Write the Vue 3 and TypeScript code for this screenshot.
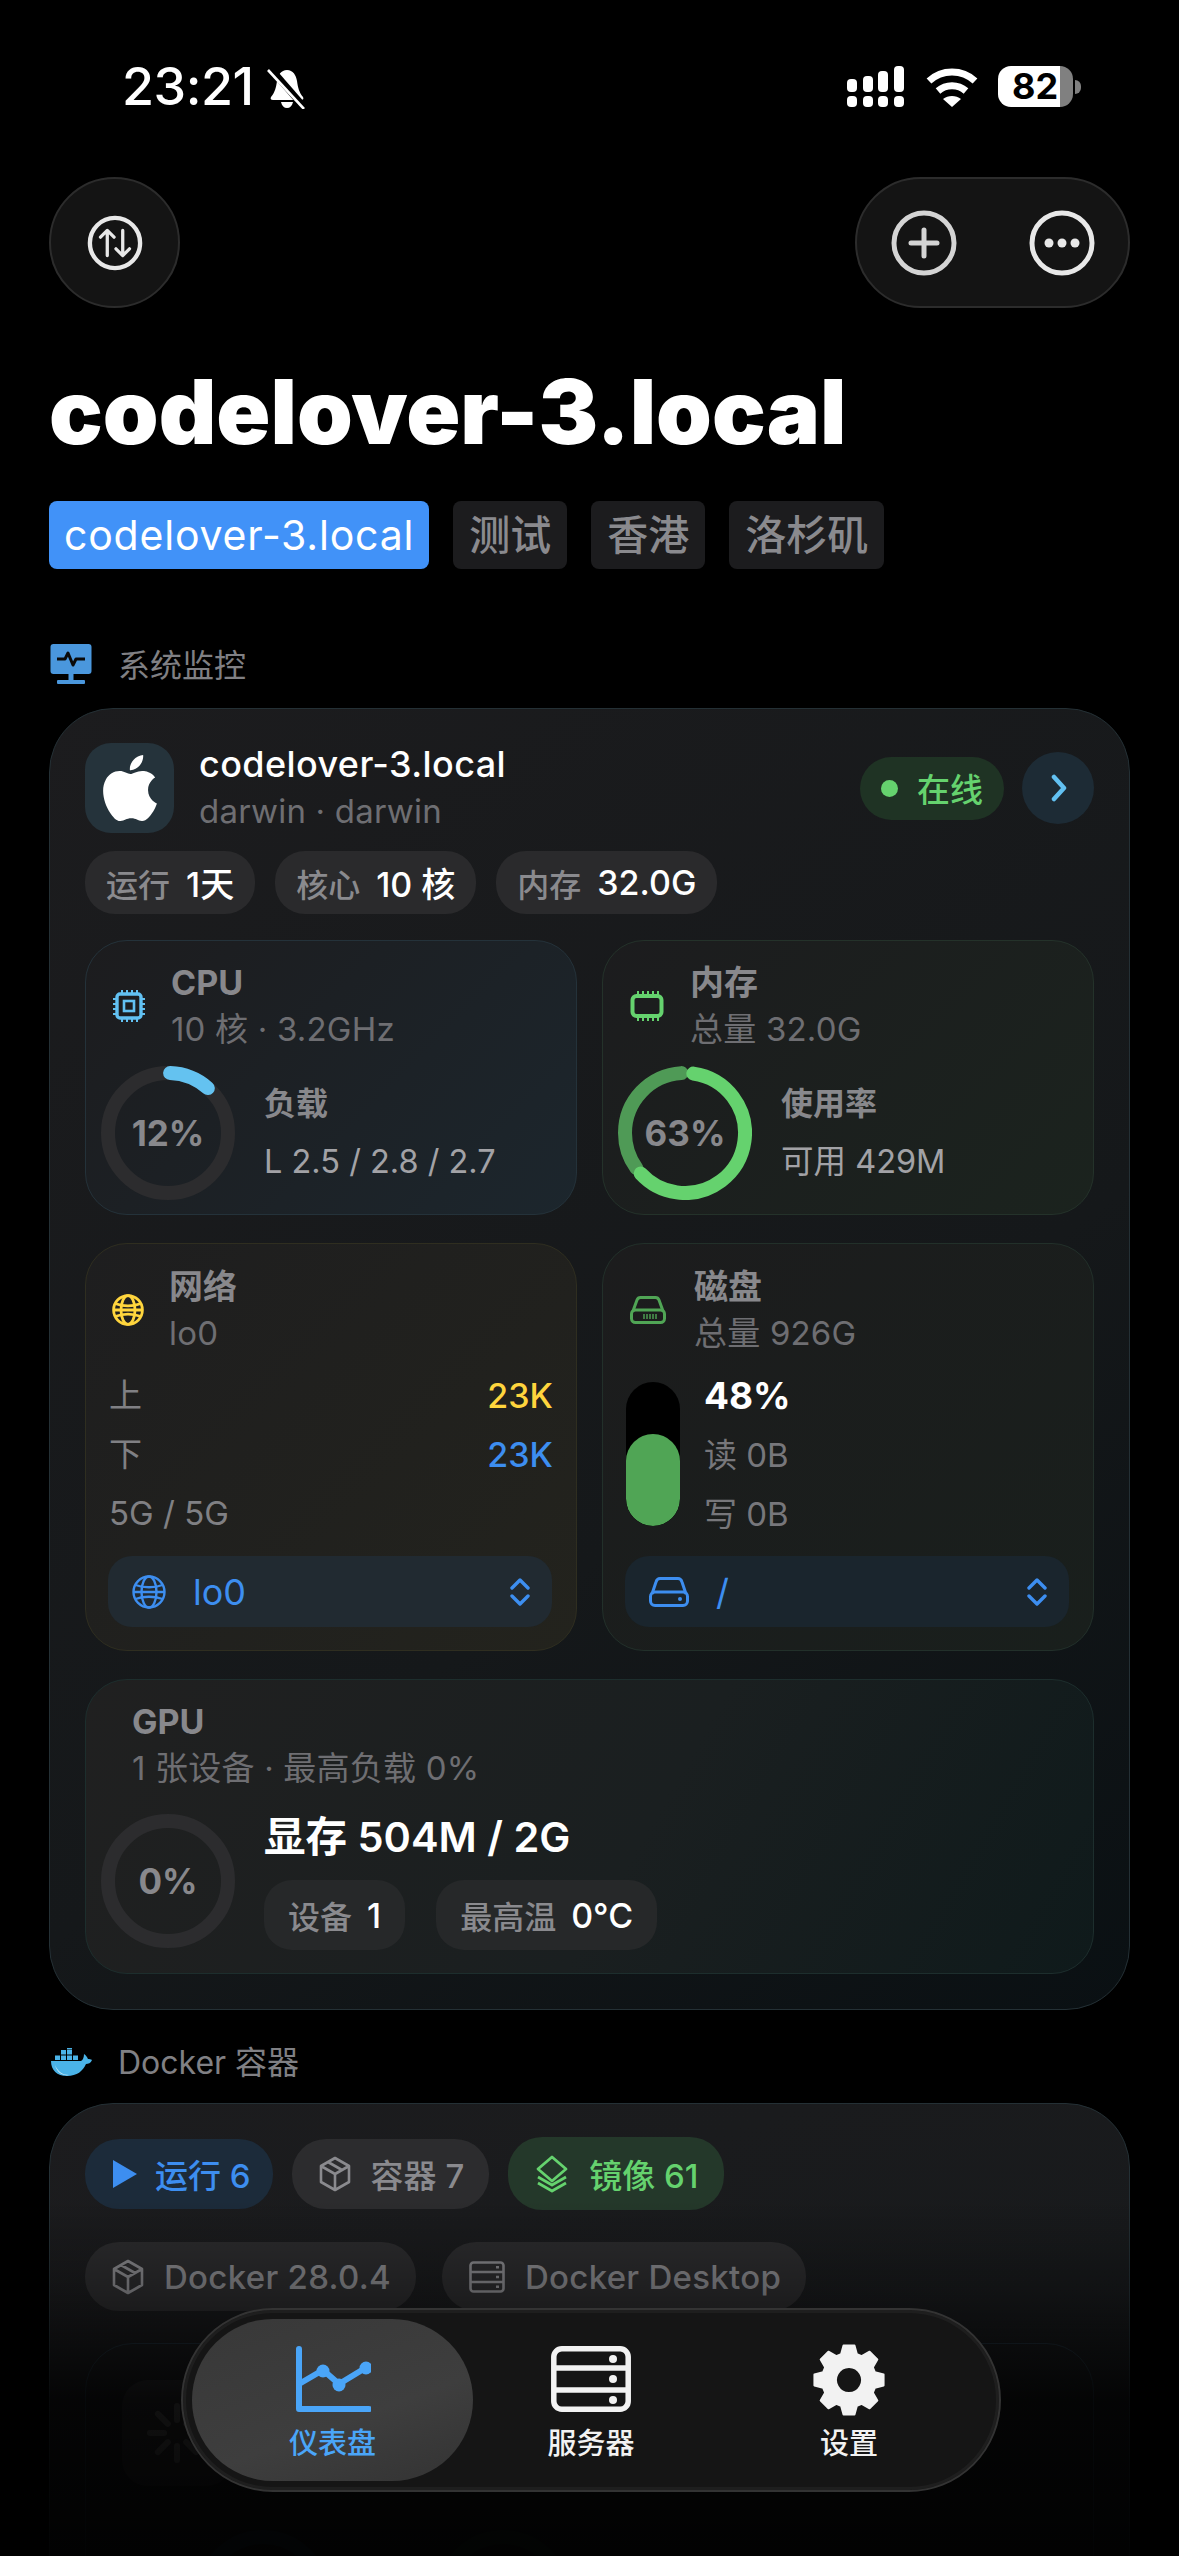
<script setup lang="ts">
// 顶部标签
const tabs = ['测试', '香港', '洛杉矶']

const hostChips = [
  { label: '运行', value: '1天' },
  { label: '核心', value: '10 核' },
  { label: '内存', value: '32.0G' },
]

function polar(r: number, deg: number): string {
  const a = (deg * Math.PI) / 180
  return `${(40 + r * Math.cos(a)).toFixed(2)} ${(40 + r * Math.sin(a)).toFixed(2)}`
}

// 八齿齿轮
function gearPath(): string {
  let d = ''
  for (let i = 0; i < 8; i++) {
    const c = i * 45 - 90
    d += `${i === 0 ? 'M' : 'L'}${polar(27, c - 17)} L${polar(35, c - 9)} L${polar(35, c + 9)} L${polar(27, c + 17)} `
  }
  return d + 'Z M40 27 a13 13 0 1 0 0.01 0 Z'
}
const gear = gearPath()

const spokes = [0, 45, 90, 135, 180, 225, 270, 315]
</script>

<template>
  <div class="page">
    <div class="status">
      <div class="status-left">
        <span class="time">23:21</span>
        <svg class="bell" width="40" height="42" viewBox="0 0 40 42">
          <path d="M20 3c6 0 9 5 10 11 1 7 2 11 6 16 1 2 0 3-2 3H6c-2 0-3-1-2-3 4-5 5-9 6-16 1-6 4-11 10-11z" fill="#fff" />
          <path d="M14 35h12c-1 4-3 6-6 6s-5-2-6-6z" fill="#fff" />
          <path d="M3 1l34 39" stroke="#000" stroke-width="7" />
          <path d="M1 3l36 39" stroke="#fff" stroke-width="2.6" />
        </svg>
      </div>
      <div class="status-right">
        <svg width="60" height="42" viewBox="0 0 60 42" fill="#fff">
          <rect x="1" y="13" width="10" height="13" rx="4" />
          <rect x="17" y="10" width="10" height="16" rx="4" />
          <rect x="32" y="5" width="10" height="21" rx="4" />
          <rect x="48" y="0" width="10" height="26" rx="4" />
          <rect x="1" y="30" width="10" height="11" rx="4" />
          <rect x="17" y="30" width="10" height="11" rx="4" />
          <rect x="32" y="30" width="10" height="11" rx="4" />
          <rect x="48" y="30" width="10" height="11" rx="4" />
        </svg>
        <svg class="wifi" width="52" height="40" viewBox="0 0 52 40" fill="none" stroke="#fff" stroke-width="7">
          <path d="M3 13C16 1 36 1 49 13" />
          <path d="M12 23c8-7 20-7 28 0" />
          <path d="M26 39l-9-8c5-4 13-4 18 0z" fill="#fff" stroke="none" />
        </svg>
        <div class="battery">
          <div class="battery-body"><span>82</span></div>
          <i class="battery-nub"></i>
        </div>
      </div>
    </div>

    <div class="toolbar">
      <button class="round-btn">
        <svg width="56" height="56" viewBox="0 0 58 58" fill="none" stroke="#e8e8e8" stroke-width="4.5" stroke-linecap="round" stroke-linejoin="round">
          <circle cx="29" cy="29" r="26" />
          <path d="M21 42V16M14 23l7-7 7 7" stroke-width="3.4" />
          <path d="M37 16v26M30 35l7 7 7-7" stroke-width="3.4" />
        </svg>
      </button>
      <div class="pill-btn">
        <svg width="66" height="66" viewBox="0 0 66 66" fill="none" stroke="#d4d4d4" stroke-width="5" stroke-linecap="round">
          <circle cx="33" cy="33" r="30" />
          <path d="M33 20v26M20 33h26" />
        </svg>
        <svg width="66" height="66" viewBox="0 0 66 66" fill="none" stroke="#e8e8e8" stroke-width="5">
          <circle cx="33" cy="33" r="30" />
          <g fill="#e8e8e8" stroke="none">
            <circle cx="20" cy="33" r="4.5" />
            <circle cx="33" cy="33" r="4.5" />
            <circle cx="46" cy="33" r="4.5" />
          </g>
        </svg>
      </div>
    </div>

    <h1 class="title">codelover-3.local</h1>

    <div class="tabs">
      <span class="tab active">codelover-3.local</span>
      <span v-for="t in tabs" :key="t" class="tab">{{ t }}</span>
    </div>

    <div class="section-head first">
      <svg width="42" height="42" viewBox="0 0 42 42">
        <rect x="0.5" y="0" width="41" height="30" rx="3" fill="#4a97dd" />
        <rect x="18.5" y="30" width="5" height="7" fill="#4a97dd" />
        <rect x="7" y="36" width="28" height="4" rx="1" fill="#4a97dd" />
        <path d="M7 15h8l3-6 5 12 3-6h9" fill="none" stroke="#0a0a0a" stroke-width="3" stroke-linejoin="round" />
      </svg>
      <span>系统监控</span>
    </div>

    <section class="card">
      <div class="host">
        <div class="host-logo">
          <svg width="66" height="66" viewBox="0 0 24 24" fill="#fff">
            <path d="M12.152 6.896c-.948 0-2.415-1.078-3.96-1.04-2.04.027-3.91 1.183-4.961 3.014-2.117 3.675-.546 9.103 1.519 12.09 1.013 1.454 2.208 3.09 3.792 3.039 1.52-.065 2.09-.987 3.935-.987 1.831 0 2.35.987 3.96.948 1.637-.026 2.676-1.48 3.676-2.948 1.156-1.688 1.636-3.325 1.662-3.415-.039-.013-3.182-1.221-3.22-4.857-.026-3.04 2.48-4.494 2.597-4.559-1.429-2.09-3.623-2.324-4.39-2.376-2-.156-3.675 1.09-4.61 1.09zM15.53 3.83c.843-1.012 1.4-2.427 1.245-3.83-1.207.052-2.662.805-3.532 1.818-.78.896-1.454 2.338-1.273 3.714 1.338.104 2.715-.688 3.559-1.701" />
          </svg>
        </div>
        <div class="host-text">
          <div class="host-name">codelover-3.local</div>
          <div class="host-sub">darwin · darwin</div>
        </div>
        <div class="online"><i></i>在线</div>
        <div class="go">
          <svg width="18" height="32" viewBox="0 0 18 32" fill="none" stroke="#62c1f2" stroke-width="4.5" stroke-linecap="round" stroke-linejoin="round">
            <path d="M5 5l10 11L5 27" />
          </svg>
        </div>
      </div>

      <div class="host-chips">
        <span v-for="c in hostChips" :key="c.label" class="chip">
          {{ c.label }}<b>{{ c.value }}</b>
        </span>
      </div>

      <div class="grid">
        <div class="panel cpu">
          <div class="panel-head">
            <svg class="head-icon" width="32" height="32" viewBox="0 0 32 32" fill="none" stroke="#62c1f2">
              <rect x="4" y="4" width="24" height="24" rx="3" stroke-width="3.4" />
              <rect x="11" y="11" width="10" height="10" stroke-width="2.6" />
              <path d="M9 0v3M14 0v3M19 0v3M24 0v3M9 29v3M14 29v3M19 29v3M24 29v3M0 9h3M0 14h3M0 19h3M0 24h3M29 9h3M29 14h3M29 19h3M29 24h3" stroke-width="2" />
            </svg>
            <div>
              <div class="panel-title">CPU</div>
              <div class="panel-sub">10 核 · 3.2GHz</div>
            </div>
          </div>
          <div class="gauge-row">
            <div class="ring">
              <svg width="134" height="134" viewBox="0 0 134 134" fill="none" stroke-width="14">
                <circle cx="67" cy="67" r="60" stroke="#2c2c2e" />
                <circle cx="67" cy="67" r="60" stroke="#64c2f0" pathLength="100" stroke-dasharray="11 100" stroke-linecap="round" transform="rotate(-88 67 67)" />
              </svg>
              <span>12%</span>
            </div>
            <div class="gauge-text">
              <div class="gauge-title">负载</div>
              <div class="gauge-value">L 2.5 / 2.8 / 2.7</div>
            </div>
          </div>
        </div>

        <div class="panel mem">
          <div class="panel-head">
            <svg class="head-icon" width="34" height="32" viewBox="0 0 34 32" fill="none" stroke="#65d26e">
              <rect x="2.5" y="6" width="29" height="20" rx="4" stroke-width="4" />
              <path d="M8 1v4M13 1v4M18 1v4M23 1v4M28 1v4M8 27v4M13 27v4M18 27v4M23 27v4M28 27v4" stroke-width="2" />
            </svg>
            <div>
              <div class="panel-title">内存</div>
              <div class="panel-sub">总量 32.0G</div>
            </div>
          </div>
          <div class="gauge-row">
            <div class="ring">
              <svg width="134" height="134" viewBox="0 0 134 134" fill="none" stroke-width="14">
                <circle cx="67" cy="67" r="60" stroke="#4f9a56" pathLength="100" stroke-dasharray="34 100" stroke-dashoffset="-65" stroke-linecap="round" transform="rotate(-90 67 67)" />
                <circle cx="67" cy="67" r="60" stroke="#65d26e" pathLength="100" stroke-dasharray="61 100" stroke-linecap="round" transform="rotate(-82 67 67)" />
              </svg>
              <span>63%</span>
            </div>
            <div class="gauge-text">
              <div class="gauge-title">使用率</div>
              <div class="gauge-value">可用 429M</div>
            </div>
          </div>
        </div>

        <div class="panel net">
          <div class="panel-head">
            <svg class="head-icon" width="32" height="32" viewBox="0 0 32 32" fill="none" stroke="#ffd53d" stroke-width="2.8">
              <circle cx="16" cy="16" r="14.4" />
              <ellipse cx="16" cy="16" rx="7" ry="14.4" />
              <path d="M3 9.5c8 3 18 3 26 0M1.6 16h28.8M3 22.5c8-3 18-3 26 0" />
            </svg>
            <div>
              <div class="panel-title">网络</div>
              <div class="panel-sub">lo0</div>
            </div>
          </div>
          <div class="net-rows">
            <div class="net-row"><span>上</span><b class="yellow">23K</b></div>
            <div class="net-row"><span>下</span><b class="blue">23K</b></div>
            <div class="net-row"><span>5G / 5G</span></div>
          </div>
          <div class="selector">
            <svg width="34" height="34" viewBox="0 0 34 34" fill="none" stroke="#3d8ef0" stroke-width="2.4">
              <circle cx="17" cy="17" r="15.5" />
              <ellipse cx="17" cy="17" rx="7.5" ry="15.5" />
              <path d="M3.5 10c8 3 19 3 27 0M1.5 17h31M3.5 24c8-3 19-3 27 0" />
            </svg>
            <span>lo0</span>
            <svg class="updown" width="20" height="28" viewBox="0 0 20 28" fill="none" stroke="#3d8ef0" stroke-width="3.4" stroke-linecap="round" stroke-linejoin="round">
              <path d="M2 10l8-8 8 8M2 18l8 8 8-8" />
            </svg>
          </div>
        </div>

        <div class="panel disk">
          <div class="panel-head">
            <svg class="head-icon" width="36" height="28" viewBox="0 0 36 28" fill="none" stroke="#50a555" stroke-width="3">
              <path d="M3 15l4-11c.6-1.600 2-2.500 3.500-2.500h15c1.500 0 2.900.9 3.500 2.500l4 11" />
              <rect x="1.500" y="14" width="33" height="12.500" rx="4" />
              <path d="M14 18v5M17 18v5M20 18v5M23 18v5M26 18v5" stroke-width="1.4" />
            </svg>
            <div>
              <div class="panel-title">磁盘</div>
              <div class="panel-sub">总量 926G</div>
            </div>
          </div>
          <div class="disk-body">
            <div class="bar"><div class="bar-fill" :style="{ height: '64%' }"></div></div>
            <div class="disk-stats">
              <b>48%</b>
              <span>读 0B</span>
              <span>写 0B</span>
            </div>
          </div>
          <div class="selector">
            <svg width="40" height="30" viewBox="0 0 40 30" fill="none" stroke="#3d8ef0" stroke-width="3">
              <path d="M3 17L7 5c.6-2 2-3.500 4-3.500h18c2 0 3.400 1.500 4 3.500l4 12" />
              <rect x="1.500" y="15" width="37" height="13.500" rx="4.500" />
              <circle cx="31" cy="22" r="2" fill="#3d8ef0" stroke="none" />
            </svg>
            <span class="slash">/</span>
            <svg class="updown" width="20" height="28" viewBox="0 0 20 28" fill="none" stroke="#3d8ef0" stroke-width="3.4" stroke-linecap="round" stroke-linejoin="round">
              <path d="M2 10l8-8 8 8M2 18l8 8 8-8" />
            </svg>
          </div>
        </div>

        <div class="panel gpu">
          <div class="gpu-head">
            <div class="panel-title">GPU</div>
            <div class="panel-sub">1 张设备 · 最高负载 0%</div>
          </div>
          <div class="gauge-row gpu-row">
            <div class="ring">
              <svg width="134" height="134" viewBox="0 0 134 134" fill="none" stroke-width="14">
                <circle cx="67" cy="67" r="60" stroke="#2c2c2e" />
              </svg>
              <span>0%</span>
            </div>
            <div class="gpu-text">
              <div class="gpu-mem">显存 504M / 2G</div>
              <div class="gpu-chips">
                <span class="chip gpu-chip">设备<b>1</b></span>
                <span class="chip gpu-chip">最高温<b>0°C</b></span>
              </div>
            </div>
          </div>
        </div>
      </div>
    </section>

    <div class="section-head docker-head">
      <svg width="42" height="28" viewBox="0 0 42 28">
        <path d="M1 13h30c2-1 3-4 3-7 2 1 3 3 4 5 1 0 3 0 4 1-1 3-4 4-6 4-3 7-9 12-19 12C7 28 1 22 1 13z" fill="#4ab3e8" />
        <path d="M5 17c3 7 8 10 14 10-6 1-12-2-14-10z" fill="#d8eef8" />
        <g fill="#4ab3e8">
          <rect x="5" y="7.500" width="5" height="4.500" />
          <rect x="11" y="7.500" width="5" height="4.500" />
          <rect x="17" y="7.500" width="5" height="4.500" />
          <rect x="23" y="7.500" width="5" height="4.500" />
          <rect x="11" y="2" width="5" height="4.500" />
          <rect x="17" y="2" width="5" height="4.500" />
          <rect x="17" y="-3" width="5" height="4.500" />
        </g>
      </svg>
      <span>Docker 容器</span>
    </div>

    <section class="card docker">
      <div class="docker-row">
        <span class="dchip run">
          <svg width="26" height="28" viewBox="0 0 26 28"><path d="M1 0l24 14L1 28z" fill="#3d8ef0" /></svg>
          运行 6
        </span>
        <span class="dchip">
          <svg width="32" height="36" viewBox="0 0 32 36" fill="none" stroke="#8a8a8e" stroke-width="2.6" stroke-linejoin="round">
            <path d="M16 2l14 8v16l-14 8-14-8V10zM2 10l14 8 14-8M16 18v16M9 6l14 8" />
          </svg>
          容器 7
        </span>
        <span class="dchip img">
          <svg width="34" height="38" viewBox="0 0 34 38" fill="none" stroke="#65d26e" stroke-width="2.8" stroke-linejoin="round">
            <path d="M17 2l14 12-14 12L3 14z" />
            <path d="M3 22l14 8 14-8M3 28l14 8 14-8" />
          </svg>
          镜像 61
        </span>
      </div>
      <div class="docker-row second">
        <span class="dchip plain">
          <svg width="32" height="36" viewBox="0 0 32 36" fill="none" stroke="#8a8a8e" stroke-width="2.6" stroke-linejoin="round">
            <path d="M16 2l14 8v16l-14 8-14-8V10zM2 10l14 8 14-8M16 18v16M9 6l14 8" />
          </svg>
          Docker 28.0.4
        </span>
        <span class="dchip plain">
          <svg width="36" height="32" viewBox="0 0 36 32" fill="none" stroke="#8a8a8e" stroke-width="2.6">
            <rect x="1.500" y="1.500" width="33" height="29" rx="3" />
            <path d="M1.500 11h33M1.500 21h33" />
            <path d="M27 6.200h3M27 16h3M27 25.800h3" />
          </svg>
          Docker Desktop
        </span>
      </div>
      <div class="inner">
        <div class="inner-box">
          <svg width="60" height="60" viewBox="0 0 60 60" stroke="#5a5a5a" stroke-width="6" stroke-linecap="round">
            <path v-for="s in spokes" :key="s" d="M30 3v14" :transform="`rotate(${s} 30 30)`" />
          </svg>
        </div>
        <div class="inner-rings">
          <svg width="134" height="134" viewBox="0 0 134 134" fill="none" stroke="#1c2c3a" stroke-width="14"><circle cx="67" cy="67" r="60" /></svg>
          <svg width="134" height="134" viewBox="0 0 134 134" fill="none" stroke="#1c2c25" stroke-width="14"><circle cx="67" cy="67" r="60" /></svg>
        </div>
      </div>
    </section>

    <div class="fade"></div>

    <nav class="nav">
      <div class="nav-item active">
        <svg width="76" height="66" viewBox="0 0 76 66" fill="none" stroke="#4aa5f8" stroke-width="6" stroke-linecap="round" stroke-linejoin="round">
          <path d="M4 3v60h70" />
          <path d="M4 38l24-14 16 14 28-17" stroke-linecap="butt" />
          <g fill="#4aa5f8" stroke="none">
            <circle cx="28" cy="25" r="6.500" />
            <circle cx="44" cy="39" r="6.500" />
            <circle cx="71" cy="22" r="6.500" />
          </g>
        </svg>
        <span>仪表盘</span>
      </div>
      <div class="nav-item">
        <svg width="80" height="66" viewBox="0 0 80 66" fill="none" stroke="#f2f2f2" stroke-width="5.500">
          <rect x="2.800" y="2.800" width="74.400" height="60.400" rx="8" />
          <path d="M3 22h74M3 44h74" />
          <g fill="#f2f2f2" stroke="none">
            <circle cx="62" cy="13" r="4" />
            <circle cx="62" cy="33" r="4" />
            <circle cx="62" cy="54" r="4" />
          </g>
        </svg>
        <span>服务器</span>
      </div>
      <div class="nav-item">
        <svg width="76" height="76" viewBox="2 2 76 76" class="gear">
          <path :d="gear" fill="#f2f2f2" fill-rule="evenodd" stroke="#f2f2f2" stroke-width="2" stroke-linejoin="round" />
        </svg>
        <span>设置</span>
      </div>
    </nav>
  </div>
</template>

<style>
html,
body {
  margin: 0;
  background: #000;
}
</style>

<style scoped>
* {
  box-sizing: border-box;
}

.page {
  position: relative;
  width: 1179px;
  height: 2556px;
  overflow: hidden;
  background: #000;
  color: #8a8a8e;
  font-family: Inter, "Noto Sans CJK SC", sans-serif;
  font-size: 33px;
}

.status {
  display: flex;
  justify-content: space-between;
  height: 177px;
  padding: 66px 98px 0 122px;
}

.status-left {
  display: flex;
  align-items: flex-start;
  gap: 13px;
  color: #fff;
}

.time {
  font-size: 52px;
  font-weight: 500;
  line-height: 42px;
  letter-spacing: -0.5px;
}

.bell {
  margin-top: 1px;
}

.status-right {
  display: flex;
  align-items: flex-start;
  gap: 20px;
}

.wifi {
  margin-top: 2px;
}

.battery {
  display: flex;
  align-items: center;
  height: 41px;
  gap: 2px;
}

.battery-body {
  width: 75px;
  height: 41px;
  border-radius: 13px;
  background: linear-gradient(to right, #fff 83%, #808080 83%);
  color: #000;
  font-size: 36px;
  font-weight: 700;
  line-height: 41px;
  padding-left: 14px;
}

.battery-nub {
  width: 6px;
  height: 14px;
  border-radius: 0 6px 6px 0;
  background: #808080;
}

.toolbar {
  display: flex;
  justify-content: space-between;
  height: 131px;
  padding: 0 49px;
}

.round-btn {
  display: flex;
  align-items: center;
  justify-content: center;
  width: 131px;
  height: 131px;
  padding: 0;
  border: 2px solid #2c2c2c;
  border-radius: 50%;
  background: #141414;
}

.pill-btn {
  display: flex;
  align-items: center;
  justify-content: space-between;
  width: 275px;
  height: 131px;
  padding: 0 33px 0 34px;
  border: 2px solid #2c2c2c;
  border-radius: 66px;
  background: #141414;
}

.title {
  height: 106px;
  margin: 51px 0 0 49px;
  color: #fff;
  font-size: 89.3px;
  font-weight: 900;
  line-height: 106px;
}

.tabs {
  display: flex;
  gap: 24px;
  height: 68px;
  margin: 36px 0 0 49px;
}

.tab {
  padding: 0 16px;
  border-radius: 8px;
  background: #1c1c1e;
  color: #8a8a8e;
  font-size: 41px;
  font-weight: 500;
  line-height: 68px;
}

.tab.active {
  padding: 0 15px;
  background: #4192f8;
  color: #fff;
  font-weight: 400;
  letter-spacing: 0.8px;
}

.section-head {
  display: flex;
  align-items: center;
  gap: 26px;
  height: 42px;
  margin-left: 50px;
  font-size: 32px;
  color: #808084;
}

.section-head span {
  margin-top: -5px;
}

.section-head.first {
  margin-top: 75px;
}

.docker-head {
  margin-top: 31px;
}

.card {
  width: 1081px;
  margin: 22px 0 0 49px;
  padding: 34px 35px 35px;
  border: 1px solid #243035;
  border-radius: 64px;
  background: linear-gradient(145deg, #1c1c1e 0%, #15181a 60%, #0a1013 100%);
}

.host {
  display: flex;
  align-items: center;
  height: 90px;
}

.host-logo {
  display: flex;
  align-items: center;
  justify-content: center;
  width: 89px;
  height: 90px;
  border-radius: 26px;
  background: #25333b;
}

.host-text {
  flex: 1;
  margin-left: 25px;
}

.host-name {
  color: #fff;
  font-size: 36px;
  font-weight: 500;
  letter-spacing: 0.4px;
  line-height: 46px;
}

.host-sub {
  color: #6e6e72;
  font-size: 33px;
  letter-spacing: 0.2px;
  line-height: 48px;
}

.online {
  display: flex;
  align-items: center;
  width: 144px;
  height: 63px;
  padding-left: 21px;
  border-radius: 32px;
  background: #1f3324;
  color: #65d26e;
  font-size: 33px;
  font-weight: 500;
}

.online i {
  width: 17px;
  height: 17px;
  margin-right: 19px;
  border-radius: 50%;
  background: #65d26e;
}

.go {
  display: flex;
  align-items: center;
  justify-content: center;
  width: 72px;
  height: 72px;
  margin-left: 18px;
  border-radius: 50%;
  background: #1d2b35;
}

.host-chips {
  display: flex;
  gap: 20px;
  margin-top: 18px;
}

.chip {
  display: inline-flex;
  align-items: center;
  height: 63px;
  padding: 0 21px;
  border-radius: 30px;
  background: #2a2a2c;
  color: #8a8a8e;
  font-size: 32px;
  font-weight: 500;
}

.chip b {
  margin-left: 16px;
  color: #fff;
  font-size: 34px;
  font-weight: 500;
}

.grid {
  display: grid;
  grid-template-columns: 492px 492px;
  grid-template-rows: 275px 408px 295px;
  gap: 28px 25px;
  margin-top: 26px;
}

.panel {
  position: relative;
  padding: 16px 15px;
  border: 1px solid #24323a;
  border-radius: 42px;
  background: linear-gradient(135deg, #1c1c1e, #1c262d);
}

.panel.mem {
  border-color: #24322a;
  background: linear-gradient(135deg, #1c1c1e, #1b231e);
}

.panel.net {
  padding: 0 23px;
  border-color: #2f2e20;
  background: linear-gradient(135deg, #1e1e1f, #23231d);
}

.panel.disk {
  padding: 0 23px;
  border-color: #22302a;
  background: linear-gradient(135deg, #1c1c1d, #191f1c);
}

.panel.gpu {
  grid-column: 1 / 3;
  border-color: #1d2e2d;
  background: linear-gradient(120deg, #202020, #1a1f20 55%, #0f1a1b);
}

.panel-head {
  display: flex;
  align-items: center;
  gap: 26px;
  padding: 3px 0 0 12px;
}

.net .panel-head,
.disk .panel-head {
  gap: 25px;
  padding: 20px 0 0 3px;
}

.disk .panel-head {
  gap: 28px;
  padding-left: 4px;
}

.panel-title {
  height: 46px;
  color: #88888c;
  font-size: 34px;
  font-weight: 700;
  line-height: 46px;
}

.panel-sub {
  color: #6e6e72;
  font-size: 33px;
  letter-spacing: 0.2px;
  line-height: 46px;
}

.gauge-row {
  display: flex;
  align-items: center;
  gap: 29px;
  margin-top: 14px;
}

.ring {
  position: relative;
  flex: none;
  width: 134px;
  height: 134px;
}

.ring svg {
  display: block;
}

.ring span {
  position: absolute;
  inset: 0;
  color: #88888c;
  font-size: 35px;
  font-weight: 700;
  line-height: 134px;
  text-align: center;
}

.gauge-title {
  color: #88888c;
  font-size: 32px;
  font-weight: 700;
  line-height: 44px;
}

.gauge-value {
  margin-top: 14px;
  color: #a2a2a6;
  font-size: 32.5px;
  line-height: 44px;
}

.net-rows {
  margin-top: 10px;
}

.net-row {
  display: flex;
  justify-content: space-between;
  height: 59px;
  color: #808084;
  font-size: 33px;
  line-height: 59px;
}

.net-row b {
  font-size: 34px;
  font-weight: 500;
}

.yellow {
  color: #ffd53d;
}

.blue {
  color: #3d8ef0;
}

.selector {
  position: absolute;
  left: 22px;
  right: 24px;
  bottom: 23px;
  display: flex;
  align-items: center;
  gap: 27px;
  height: 71px;
  padding: 0 22px 0 24px;
  border-radius: 24px;
  background: #212a31;
  color: #3d8ef0;
  font-size: 36px;
}

.disk .selector {
  background: #1a252d;
}

.updown {
  margin-left: auto;
}

.disk-body {
  display: flex;
  gap: 24px;
  margin-top: 26px;
}

.bar {
  position: relative;
  width: 54px;
  height: 144px;
  border-radius: 27px;
  background: #000;
  overflow: hidden;
}

.bar-fill {
  position: absolute;
  left: 0;
  right: 0;
  bottom: 0;
  border-radius: 27px;
  background: #50a555;
}

.disk-stats {
  display: flex;
  flex-direction: column;
  gap: 15px;
  margin-top: -8px;
  color: #77777b;
  line-height: 44px;
}

.disk-stats b {
  color: #fff;
  font-size: 37px;
  font-weight: 700;
}

.gpu-head {
  padding: 3px 0 0 31px;
}

.gpu-row {
  margin-top: 21px;
  gap: 29px;
}

.gpu-mem {
  color: #fff;
  font-size: 41.5px;
  font-weight: 600;
  line-height: 50px;
}

.gpu-chips {
  display: flex;
  gap: 31px;
  margin-top: 18px;
}

.chip.gpu-chip {
  height: 70px;
  padding: 0 24px;
  border-radius: 28px;
  background: #262829;
}

.chip.gpu-chip b {
  margin-left: 15px;
}

.docker {
  height: 700px;
  margin-top: 20px;
  padding-top: 33px;
  background: linear-gradient(160deg, #1c1c1e, #14181a);
}

.docker-row {
  display: flex;
  align-items: center;
  gap: 19px;
  height: 73px;
}

.docker-row.second {
  gap: 26px;
  height: 69px;
  margin-top: 32px;
}

.dchip {
  display: inline-flex;
  align-items: center;
  gap: 20px;
  height: 70px;
  padding: 0 25px 0 27px;
  border-radius: 34px;
  background: #2c2c2e;
  color: #8a8a8e;
  font-weight: 500;
}

.dchip.run {
  gap: 17px;
  padding-right: 22px;
  background: #1c2b3a;
  color: #3d8ef0;
}

.dchip.img {
  height: 73px;
  background: #24382a;
  color: #65d26e;
}

.dchip.plain {
  height: 69px;
  letter-spacing: 0.3px;
}

.inner {
  height: 400px;
  margin-top: 32px;
  padding: 36px 36px;
  border: 1px solid #22303a;
  border-radius: 48px;
}

.inner-box {
  display: flex;
  align-items: center;
  justify-content: center;
  width: 110px;
  height: 106px;
  border-radius: 26px;
  background: #2a2a2c;
}

.inner-rings {
  display: flex;
  gap: 106px;
  margin: 44px 0 0 74px;
}

.fade {
  position: absolute;
  inset: 0;
  background: linear-gradient(
    to bottom,
    rgba(0, 0, 0, 0) 2200px,
    rgba(0, 0, 0, 0.3) 2290px,
    rgba(0, 0, 0, 0.82) 2400px,
    rgba(0, 0, 0, 0.92) 2556px
  );
  pointer-events: none;
}

.nav {
  position: absolute;
  left: 181px;
  top: 2308px;
  display: grid;
  grid-template-columns: 281px 236px 280px;
  align-items: center;
  width: 820px;
  height: 184px;
  padding: 0 9px;
  border: 2px solid #333;
  border-radius: 92px;
  background: #151515;
  box-shadow: inset 0 0 0 3px #1e1e1e;
}

.nav-item {
  display: flex;
  flex-direction: column;
  align-items: center;
  height: 162px;
  padding-top: 27px;
  color: #f2f2f2;
  font-size: 29px;
  font-weight: 500;
}

.nav-item svg {
  flex: none;
}

.nav-item span {
  margin-top: 12px;
  line-height: 40px;
}

.nav-item .gear {
  margin-top: -4px;
}

.nav-item .gear + span {
  margin-top: 6px;
}

.nav-item.active {
  border-radius: 81px;
  background: linear-gradient(160deg, #383838, #3e3e3e 60%, #333);
  color: #4aa5f8;
}
</style>
